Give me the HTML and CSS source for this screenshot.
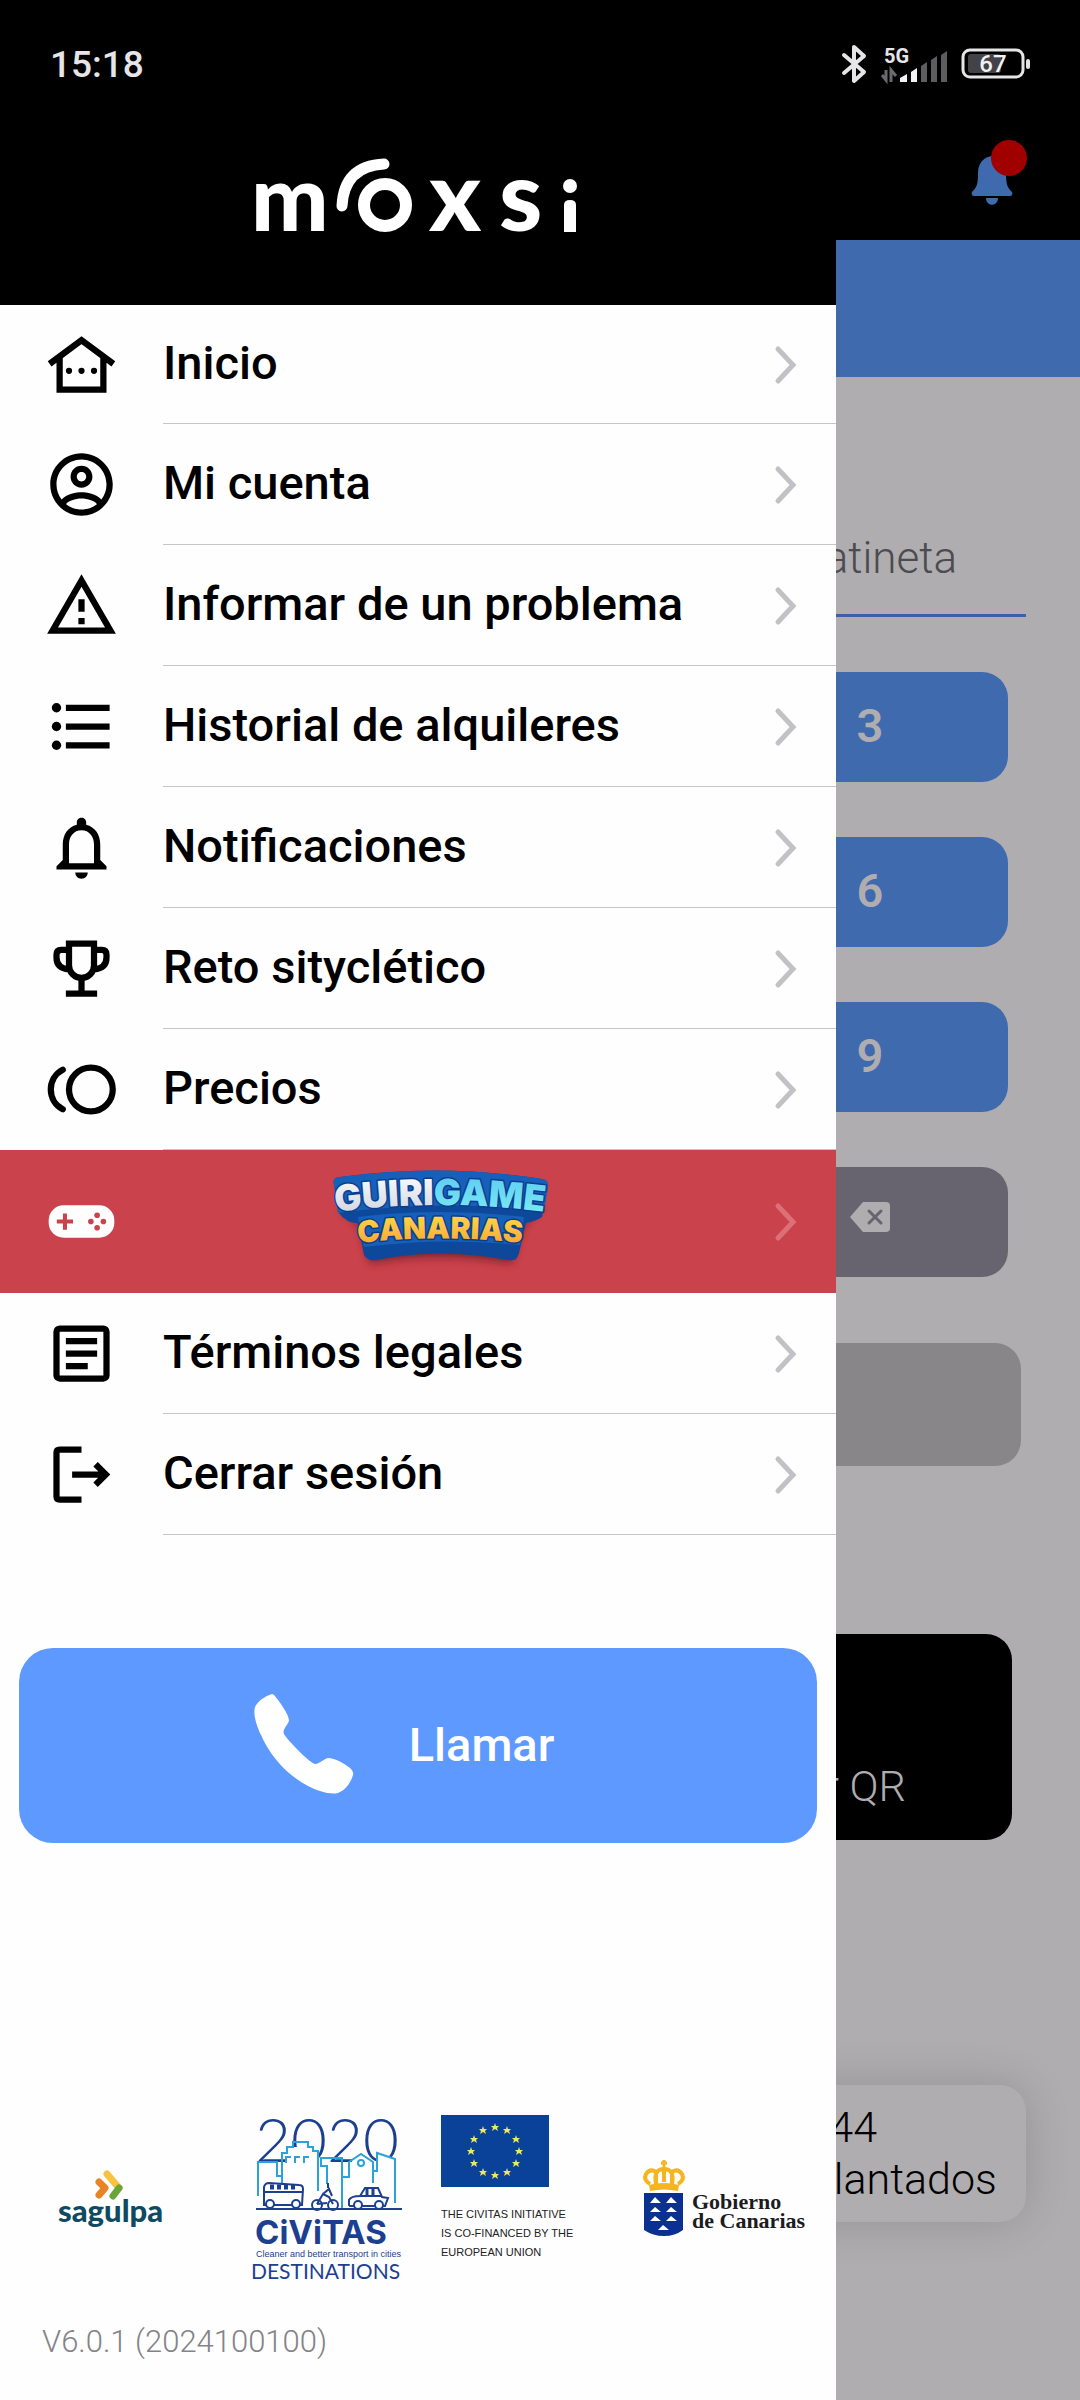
FILE: index.html
```html
<!DOCTYPE html>
<html lang="es">
<head>
    <meta charset="UTF-8">
    <meta name="viewport" content="width=device-width, initial-scale=1.0">
    <title>Moxsi</title>
    <link rel="stylesheet" href="styles.css">
</head>
<body>
    <div class="app">
        <div class="status-bar">
            <span class="clock">15:18</span>
            <div class="status-icons">
                <svg class="bluetooth" width="26" height="40" viewBox="0 0 26 40"><path d="M3 11L23 28L13 37V3L23 12L3 29" fill="none" stroke="#e6e5e8" stroke-width="4" stroke-linejoin="round" stroke-linecap="round"/></svg>
                <svg class="signal" width="66" height="44" viewBox="0 -6 66 44">
                    <text x="3" y="15" class="signal-text">5G</text>
                    <path d="M5 22V32L1 27M10 34V22L15 28" fill="none" stroke="#6a696c" stroke-width="3"/>
                    <path d="M19 34V30L26 26V34Z M30 34V24L36 20V34Z" fill="#f2f1f4"/>
                    <path d="M40 34V18L46 14V34Z M50 34V12L56 8V34Z M60 34V7L66 3V34Z" fill="#5d5c5f"/>
                </svg>
                <svg width="70" height="32" viewBox="0 0 70 32">
                    <rect x="2" y="2" width="60" height="27" rx="7" fill="none" stroke="#e6e5e8" stroke-width="3"/>
                    <rect x="7" y="6" width="33" height="19" rx="3" fill="#434246"/>
                    <rect x="65" y="11" width="4" height="10" rx="2" fill="#e6e5e8"/>
                    <text x="32" y="24" text-anchor="middle" class="battery-text">67</text>
                </svg>
            </div>
        </div>

        <main class="home">
            <header class="home-header">
                <button type="button" class="bell" aria-label="Avisos">
                    <svg width="42" height="50" viewBox="0 0 42 50"><path d="M21 0C12 1 7 8 7 17C7 28 6 31 1 36C0 38 1 40 3 40H39C41 40 42 38 41 36C36 31 35 28 35 17C35 8 30 1 21 0Z M15 42H27C27 51 15 51 15 42Z" fill="#3f6aad"/></svg>
                    <span class="bell-dot"></span>
                </button>
            </header>
            <div class="banner"></div>
            <input type="text" class="code-input" placeholder="patineta" aria-label="patineta">
            <div class="keypad">
                <button type="button">3</button>
                <button type="button">6</button>
                <button type="button">9</button>
                <button type="button" class="delete" aria-label="Borrar">
                    <svg width="40" height="30" viewBox="0 0 40 30"><path d="M13 0H36Q40 0 40 4V26Q40 30 36 30H13L0 15Z" fill="#afadb0"/><path d="M19 9L31 21M31 9L19 21" stroke="#676470" stroke-width="3" stroke-linecap="round"/></svg>
                </button>
            </div>
            <button type="button" class="unlock" aria-label="Desbloquear" disabled></button>
            <button type="button" class="scan">Escanear QR</button>
            <div class="trees">
                <div class="trees-count">44</div>
                <div>plantados</div>
            </div>
        </main>

        <aside class="drawer">
            <div class="drawer-header">
                <svg width="322" height="76" viewBox="0 0 322 76" role="img" aria-label="moxsi">
                    <text x="-6" y="73" class="brand-m">m</text>
                    <circle cx="128" cy="47" r="21" fill="none" stroke="#fff" stroke-width="12"/>
                    <path d="M85 48Q87 8 127 6" fill="none" stroke="#fff" stroke-width="11" stroke-linecap="round"/>
                    <text x="172" y="73" class="brand-text">x</text>
                    <text x="242" y="73" class="brand-text">s</text>
                    <circle cx="313" cy="28" r="7" fill="#fff"/>
                    <path d="M307 74V47Q307 42 313 42Q319 42 319 47V74Z" fill="#fff"/>
                </svg>
            </div>

            <nav class="menu">
                <a href="#" class="menu-item">
                    <svg class="icon" viewBox="0 0 24 24"><path d="M5 10V20H19V10M1.8 11.8L12 4.2L22.2 11.8" class="line"/><circle cx="8" cy="14" r="1"/><circle cx="12" cy="14" r="1"/><circle cx="16" cy="14" r="1"/></svg>
                    <span class="label">Inicio<svg class="chevron" viewBox="0 0 24 40"><path d="M4 4L19 20L4 36"/></svg></span>
                </a>
                <a href="#" class="menu-item">
                    <svg class="icon" viewBox="0 0 24 24"><path d="M7.07 18.28C7.5 17.38 10.12 16.5 12 16.5S16.5 17.38 16.93 18.28C15.57 19.36 13.86 20 12 20S8.43 19.36 7.07 18.28M18.36 16.83C16.93 15.09 13.46 14.5 12 14.5S7.07 15.09 5.64 16.83C4.62 15.5 4 13.82 4 12C4 7.59 7.59 4 12 4S20 7.59 20 12C20 13.82 19.38 15.5 18.36 16.83M12 2C6.48 2 2 6.48 2 12S6.48 22 12 22 22 17.52 22 12 17.5 2 12 2M12 6C10.06 6 8.5 7.56 8.5 9.5S10.06 13 12 13 15.5 11.44 15.5 9.5 13.94 6 12 6M12 11C11.17 11 10.5 10.33 10.5 9.5S11.17 8 12 8 13.5 8.67 13.5 9.5 12.83 11 12 11Z"/></svg>
                    <span class="label">Mi cuenta<svg class="chevron" viewBox="0 0 24 40"><path d="M4 4L19 20L4 36"/></svg></span>
                </a>
                <a href="#" class="menu-item">
                    <svg class="icon" viewBox="0 0 24 24"><path d="M12 2L1 21H23M12 6L19.53 19H4.47M11 10V14H13V10M11 16V18H13V16"/></svg>
                    <span class="label">Informar de un problema<svg class="chevron" viewBox="0 0 24 40"><path d="M4 4L19 20L4 36"/></svg></span>
                </a>
                <a href="#" class="menu-item">
                    <svg class="icon" viewBox="0 0 24 24"><path d="M7 5H21V7H7ZM7 11H21V13H7ZM7 17H21V19H7Z"/><circle cx="4" cy="6" r="1.5"/><circle cx="4" cy="12" r="1.5"/><circle cx="4" cy="18" r="1.5"/></svg>
                    <span class="label">Historial de alquileres<svg class="chevron" viewBox="0 0 24 40"><path d="M4 4L19 20L4 36"/></svg></span>
                </a>
                <a href="#" class="menu-item">
                    <svg class="icon" viewBox="0 0 24 24"><path d="M12 22c1.1 0 2-.9 2-2h-4c0 1.1.9 2 2 2zm6-6v-5c0-3.07-1.63-5.64-4.5-6.32V4c0-.83-.67-1.5-1.5-1.5s-1.5.67-1.5 1.5v.68C7.64 5.36 6 7.92 6 11v5l-2 2v1h16v-1l-2-2zm-2 1H8v-6c0-2.48 1.51-4.5 4-4.5s4 2.02 4 4.5v6z"/></svg>
                    <span class="label">Notificaciones<svg class="chevron" viewBox="0 0 24 40"><path d="M4 4L19 20L4 36"/></svg></span>
                </a>
                <a href="#" class="menu-item">
                    <svg class="icon" viewBox="0 0 24 24"><path d="M8 4H16V11A4 4 0 0 1 8 11ZM8 6H5.5Q4 6 4 7.5V8.5Q4 12 8 12.3M16 6H18.5Q20 6 20 7.5V8.5Q20 12 16 12.3M12 15V20M7 20H17" class="line"/></svg>
                    <span class="label">Reto sityclético<svg class="chevron" viewBox="0 0 24 40"><path d="M4 4L19 20L4 36"/></svg></span>
                </a>
                <a href="#" class="menu-item">
                    <svg class="icon" viewBox="0 0 24 24"><circle cx="15" cy="12" r="7" class="line"/><path d="M6 5.7A7.1 7.1 0 0 0 6 18.3" class="line" stroke-linecap="round"/></svg>
                    <span class="label">Precios<svg class="chevron" viewBox="0 0 24 40"><path d="M4 4L19 20L4 36"/></svg></span>
                </a>
                <a href="#" class="menu-item game">
                    <svg class="icon" viewBox="0 0 24 24"><rect x="1.5" y="6.8" width="21" height="10.4" rx="4.8" fill="#fff"/><path d="M6.7 9.4V14.6M4.1 12H9.3" stroke="#ca424b" stroke-width="1.3"/><g fill="#ca424b"><circle cx="15" cy="12" r=".9"/><circle cx="19" cy="12" r=".9"/><circle cx="17" cy="10" r=".9"/><circle cx="17" cy="14" r=".9"/></g></svg>
                    <span class="label">
                        <svg class="game-logo" viewBox="0 0 240 130" role="img" aria-label="Guirigame Canarias">
                            <defs>
                                <path id="arc-top" d="M14 55Q120 41 226 55"/>
                                <path id="arc-bottom" d="M38 86Q120 77 202 86"/>
                                <linearGradient id="white" x1="0" y1="0" x2="0" y2="1"><stop offset="0" stop-color="#fff"/><stop offset="1" stop-color="#c9d0de"/></linearGradient>
                                <linearGradient id="cyan" x1="0" y1="0" x2="0" y2="1"><stop offset="0" stop-color="#5cc8f2"/><stop offset="1" stop-color="#7ef0f2"/></linearGradient>
                                <linearGradient id="gold" x1="0" y1="0" x2="0" y2="1"><stop offset="0" stop-color="#ffdf4d"/><stop offset="1" stop-color="#f99f2c"/></linearGradient>
                                <filter id="soft" x="-20%" y="-50%" width="140%" height="200%"><feGaussianBlur stdDeviation="4"/></filter>
                            </defs>
                            <path d="M20 50Q120 35 222 50L202 70L192 106Q120 93 50 106L40 70Z" fill="#5a1520" opacity=".7" filter="url(#soft)"/>
                            <path d="M14 28Q12 20 20 20Q120 6 222 22Q229 23 228 30L222 60Q216 64 206 66L199 96Q197 105 188 103Q120 90 56 103Q48 105 44 98L38 66Q26 66 19 56Z" fill="#0d489b"/>
                            <path d="M14 28Q12 20 20 20Q120 6 222 22Q229 23 228 30L224 54Q120 42 18 56Z" fill="#1660b9"/>
                            <path d="M38 60Q120 50 204 60L200 88Q120 80 44 90Z" fill="#1660b9"/>
                            <text class="game-top"><textPath href="#arc-top" startOffset="50%" text-anchor="middle"><tspan fill="url(#white)">GUIRI</tspan><tspan fill="url(#cyan)">GAME</tspan></textPath></text>
                            <text class="game-bottom" fill="url(#gold)"><textPath href="#arc-bottom" startOffset="50%" text-anchor="middle">CANARIAS</textPath></text>
                        </svg>
                        <svg class="chevron" viewBox="0 0 24 40"><path d="M4 4L19 20L4 36"/></svg>
                    </span>
                </a>
                <a href="#" class="menu-item">
                    <svg class="icon" viewBox="0 0 24 24"><rect x="4" y="4" width="16" height="16" rx="1" class="line"/><path d="M7 8H17M7 12H17M7 16H14" class="line"/></svg>
                    <span class="label">Términos legales<svg class="chevron" viewBox="0 0 24 40"><path d="M4 4L19 20L4 36"/></svg></span>
                </a>
                <a href="#" class="menu-item">
                    <svg class="icon" viewBox="0 0 24 24"><path d="M12 4H5Q4 4 4 5V19Q4 20 5 20H12M9 12H19M16.5 8.7L19.8 12L16.5 15.3" class="line"/></svg>
                    <span class="label">Cerrar sesión<svg class="chevron" viewBox="0 0 24 40"><path d="M4 4L19 20L4 36"/></svg></span>
                </a>
            </nav>

            <button type="button" class="call">
                <svg width="100" height="100" viewBox="0 0 100 100"><path d="M18 0C11 2 4 7 1 13C-1 20 2 30 7 41C16 62 33 81 54 92C64 97 76 101 84 99C92 96 97 88 99 81C100 79 98 76 96 74C90 69 82 65 75 64C70 64 66 70 61 70C56 69 34 47 30 40C28 36 33 32 35 27C35 20 25 7 20 1Q19 0 18 0Z" fill="#fff"/></svg>
                <span>Llamar</span>
            </button>

            <footer class="drawer-footer">
                <div class="partners">
                    <svg class="sagulpa" width="106" height="60" viewBox="0 0 106 60">
                        <g fill="none" stroke-width="7" stroke-linecap="round" stroke-linejoin="round">
                            <path d="M41 13L47 19L41 26" stroke="#e98324"/>
                            <path d="M49 5L61 19" stroke="#f7c340"/>
                            <path d="M61 19L55 27" stroke="#6aa53a"/>
                        </g>
                        <text x="0" y="53" class="sagulpa-text">sagulpa</text>
                    </svg>
                    <svg class="civitas" width="154" height="168" viewBox="0 0 154 168">
                        <text x="4" y="47" class="civitas-year">2020</text>
                        <path d="M31 97V52H37V38H43V32H62V38H68V52H101V45L110 38L121 45V58H127V38L143 43V97Z" fill="#fff"/>
                        <g fill="none" stroke="#2ba3d8" stroke-width="2">
                            <path d="M7 81V47H26V61H31M31 70V43V38H36V32H42V27H57V32H62V36H67V76M69 51H76V69M70 51V43H91V93M91 62H98V47L110 39L122 47V68M122 56H126V38L144 44V88"/>
                            <path d="M35 48V42H40M44 48V42H49M53 48V42H58"/>
                            <circle cx="110" cy="48" r="3"/>
                        </g>
                        <g fill="none" stroke="#1c3f8f" stroke-width="2">
                            <path d="M5 94H151M13 87V72Q14 68 18 68L48 70Q52 70 52 74L51 90H13ZM13 77H51"/>
                            <path d="M19 72H47" stroke-width="5" stroke-dasharray="4 3"/>
                            <circle cx="19" cy="89" r="4" fill="#fff"/><circle cx="45" cy="89" r="4" fill="#fff"/>
                            <circle cx="66" cy="90" r="5"/><circle cx="82" cy="90" r="5"/>
                            <path d="M66 89L72 79L78 82L82 89M72 79L78 74L81 81M77 68V73M66 89L76 88"/>
                            <path d="M98 90V85Q100 81 109 81L114 73H127L131 82L137 83L134 91H99ZM109 81H131"/>
                            <path d="M116 74V81M122 74V81" stroke-width="3"/>
                            <circle cx="107" cy="90" r="4" fill="#fff"/><circle cx="128" cy="90" r="4" fill="#fff"/>
                        </g>
                        <text x="4" y="129" class="civitas-name">CiViTAS</text>
                        <text x="5" y="142" class="civitas-tag">Cleaner and better transport in cities</text>
                        <text x="0" y="164" class="civitas-sub">DESTINATIONS</text>
                    </svg>
                    <div class="europe">
                        <svg width="108" height="72" viewBox="-54 -36 108 72">
                            <defs><path id="star" d="M0-4L1-1H4L2 1L3 4L0 2L-3 4L-2 1L-4-1H-1Z"/></defs>
                            <rect x="-54" y="-36" width="108" height="72" fill="#0b4299"/>
                            <g fill="#eaea62">
                                <use href="#star" x="0" y="-24"/><use href="#star" x="12" y="-21"/><use href="#star" x="21" y="-12"/><use href="#star" x="24" y="0"/>
                                <use href="#star" x="21" y="12"/><use href="#star" x="12" y="21"/><use href="#star" x="0" y="24"/><use href="#star" x="-12" y="21"/>
                                <use href="#star" x="-21" y="12"/><use href="#star" x="-24" y="0"/><use href="#star" x="-21" y="-12"/><use href="#star" x="-12" y="-21"/>
                            </g>
                        </svg>
                        <p>THE CIVITAS INITIATIVE<br>IS CO-FINANCED BY THE<br>EUROPEAN UNION</p>
                    </div>
                    <div class="canarias">
                        <svg width="42" height="78" viewBox="0 0 42 78">
                            <path d="M21 0V8M18 3H24" stroke="#f4b51f" stroke-width="3"/>
                            <path d="M7 24Q0 20 3 14Q7 8 13 12V24M13 24Q10 9 21 9Q32 9 29 24M29 24V12Q35 8 39 14Q42 20 35 24M21 9V22" fill="none" stroke="#f4b51f" stroke-width="4"/>
                            <path d="M6 25Q21 21 36 25L35 31Q21 28 7 31Z" fill="#f4b51f"/>
                            <path d="M1 33H40V70Q32 76 21 76Q10 76 1 70Z" fill="#0a3190"/>
                            <path d="M7 43L12 37L18 43ZM23 43L28 37L34 43ZM7 52L12 47L18 52ZM23 52L28 47L34 52ZM7 61L12 56L18 61ZM23 61L28 56L34 61ZM15 70L20 65L26 70Z" fill="#fff"/>
                        </svg>
                        <p>Gobierno<br>de Canarias</p>
                    </div>
                </div>
                <p class="version">V6.0.1 (2024100100)</p>
            </footer>
        </aside>
    </div>
</body>
</html>
```

FILE: styles.css
```css
* {
    box-sizing: border-box;
}

body {
    margin: 0;
    font-family: Roboto, "Liberation Sans", sans-serif;
    background-color: #afadb0;
}

p {
    margin: 0;
}

button {
    font-family: inherit;
    border: none;
    padding: 0;
    cursor: pointer;
}

svg {
    display: block;
    flex-shrink: 0;
    overflow: visible;
}

.app {
    position: relative;
    min-height: 100vh;
    overflow: hidden;
}

/* Status bar */
.status-bar {
    position: relative;
    z-index: 2;
    display: flex;
    justify-content: space-between;
    align-items: center;
    height: 128px;
    padding: 0 49px 0 50px;
    background-color: #000;
}

.clock {
    font-size: 37px;
    font-weight: 500;
    color: #e6e5e8;
}

.status-icons {
    display: flex;
    align-items: center;
    gap: 14px;
}

.signal-text {
    font-size: 20px;
    font-weight: 700;
    fill: #e6e5e8;
}

.battery-text {
    font-size: 24px;
    font-weight: 500;
    fill: #f2f1f4;
}

/* Page behind the drawer */
.home {
    display: flex;
    flex-direction: column;
    align-items: flex-end;
}

.home-header {
    display: flex;
    justify-content: flex-end;
    align-self: stretch;
    height: 112px;
    padding: 28px 67px 0 0;
    background-color: #000;
}

.bell {
    position: relative;
    height: 50px;
    background: none;
}

.bell-dot {
    position: absolute;
    top: -16px;
    right: -14px;
    width: 36px;
    height: 36px;
    border-radius: 50%;
    background-color: #a00000;
}

.banner {
    align-self: stretch;
    height: 137px;
    background-color: #3f6aad;
}

.code-input {
    width: calc(100% - 108px);
    height: 240px;
    margin-right: 54px;
    padding: 124px 69px 0 0;
    border: none;
    border-bottom: 3px solid #3f5fa8;
    background: none;
    font-family: inherit;
    font-size: 44px;
    font-weight: 300;
    text-align: right;
}

.code-input::placeholder {
    color: #4c4b4f;
}

.keypad {
    display: flex;
    flex-direction: column;
    gap: 55px;
    margin: 55px 72px 66px 0;
}

.keypad button {
    display: flex;
    justify-content: center;
    align-items: center;
    width: 276px;
    height: 110px;
    padding-bottom: 4px;
    border-radius: 26px;
    background-color: #3f6aad;
    color: #afadb0;
    font-size: 47px;
    font-weight: 600;
}

.keypad .delete {
    padding-bottom: 10px;
    background-color: #676470;
}

.unlock {
    width: calc(100% - 118px);
    height: 123px;
    margin-right: 59px;
    border-radius: 26px;
    background-color: #888688;
}

.scan {
    width: 442px;
    height: 206px;
    margin: 168px 68px 245px 0;
    padding: 98px 12px 0 0;
    border-radius: 26px;
    background-color: #000;
    color: #afadb0;
    font-size: 43px;
    font-weight: 300;
}

.trees {
    width: 442px;
    height: 137px;
    margin-right: 54px;
    padding: 16px 28px 0 226px;
    border-radius: 26px;
    background-color: #afadb0;
    box-shadow: 0 0 46px rgba(0, 0, 0, 0.16);
    font-size: 43px;
    font-weight: 300;
    line-height: 52px;
}

.trees-count {
    width: 67px;
    text-align: right;
}

/* Drawer */
.drawer {
    position: absolute;
    top: 0;
    bottom: 0;
    left: 0;
    z-index: 1;
    display: flex;
    flex-direction: column;
    width: calc(100% - 244px);
    background-color: #fefefe;
}

.drawer-header {
    display: flex;
    justify-content: center;
    height: 305px;
    padding-top: 158px;
    background-color: #000;
}

.brand-m,
.brand-text {
    font-family: Lato, sans-serif;
    font-weight: 900;
    fill: #fff;
}

.brand-m {
    font-size: 92px;
}

.brand-text {
    font-size: 98px;
}

.menu-item {
    display: flex;
    align-items: center;
    height: 121px;
    padding-left: 44px;
    color: #000;
    text-decoration: none;
}

.menu-item:first-child {
    height: 119px;
}

.icon {
    width: 75px;
    height: 75px;
    margin-right: 44px;
}

.line {
    fill: none;
    stroke: #000;
    stroke-width: 2;
}

.label {
    display: flex;
    flex: 1;
    justify-content: space-between;
    align-items: center;
    align-self: stretch;
    padding: 0 38px 4px 0;
    border-bottom: 1px solid #c6c5c8;
    font-size: 47px;
    font-weight: 500;
}

.chevron {
    width: 24px;
    height: 40px;
    margin-top: 5px;
    fill: none;
    stroke: #c2c1c6;
    stroke-width: 5;
    stroke-linecap: round;
}

.game {
    height: 143px;
    background-color: #ca424b;
}

.game .label {
    padding: 0 38px 0 157px;
    border-bottom: none;
}

.game .chevron {
    margin-top: 0;
    stroke: #dc7076;
}

.game-logo {
    width: 240px;
    height: 130px;
}

.game-top,
.game-bottom {
    font-family: Inter, Roboto, sans-serif;
    font-weight: 900;
    stroke: #0a3d8f;
    stroke-width: 3px;
    stroke-linejoin: round;
    paint-order: stroke;
}

.game-top {
    font-size: 36px;
}

.game-bottom {
    font-size: 30px;
}

.call {
    display: flex;
    justify-content: center;
    align-items: center;
    gap: 55px;
    height: 195px;
    margin: 113px 19px 0;
    padding: 0 28px 3px 0;
    border-radius: 34px;
    background-color: #5e99ff;
    color: #fff;
    font-size: 47px;
    font-weight: 500;
}

/* Partner logos and version */
.drawer-footer {
    margin-top: auto;
    padding-bottom: 39px;
}

.partners {
    display: flex;
    align-items: center;
    padding-left: 58px;
}

.sagulpa {
    margin-right: 87px;
}

.civitas {
    margin-right: 36px;
}

.europe {
    align-self: flex-start;
    width: 202px;
    font-family: "Liberation Sans", sans-serif;
    font-size: 11px;
    line-height: 19px;
    color: #222;
}

.europe p {
    margin-top: 18px;
    white-space: nowrap;
}

.canarias {
    display: flex;
    align-items: center;
    gap: 7px;
    font-family: "Liberation Serif", serif;
    font-size: 22px;
    font-weight: 700;
    line-height: 19px;
    color: #1c1b1e;
}

.canarias p {
    margin-top: 24px;
    white-space: nowrap;
}

.sagulpa-text {
    font-family: Lato, sans-serif;
    font-size: 31px;
    font-weight: 900;
    fill: #0f4a62;
}

.civitas-year,
.civitas-sub {
    font-family: Lato, sans-serif;
    fill: #1c3f8f;
}

.civitas-year {
    font-size: 62px;
    font-weight: 300;
}

.civitas-name {
    font-family: Inter, sans-serif;
    font-size: 33px;
    font-weight: 700;
    fill: #1c3f8f;
}

.civitas-tag {
    font-family: "Liberation Sans", sans-serif;
    font-size: 9px;
    fill: #1c3f8f;
}

.civitas-sub {
    font-size: 21px;
    font-weight: 400;
}

.version {
    margin-top: 40px;
    padding-left: 42px;
    font-size: 31px;
    font-weight: 300;
    line-height: 38px;
    color: #848387;
}
```
